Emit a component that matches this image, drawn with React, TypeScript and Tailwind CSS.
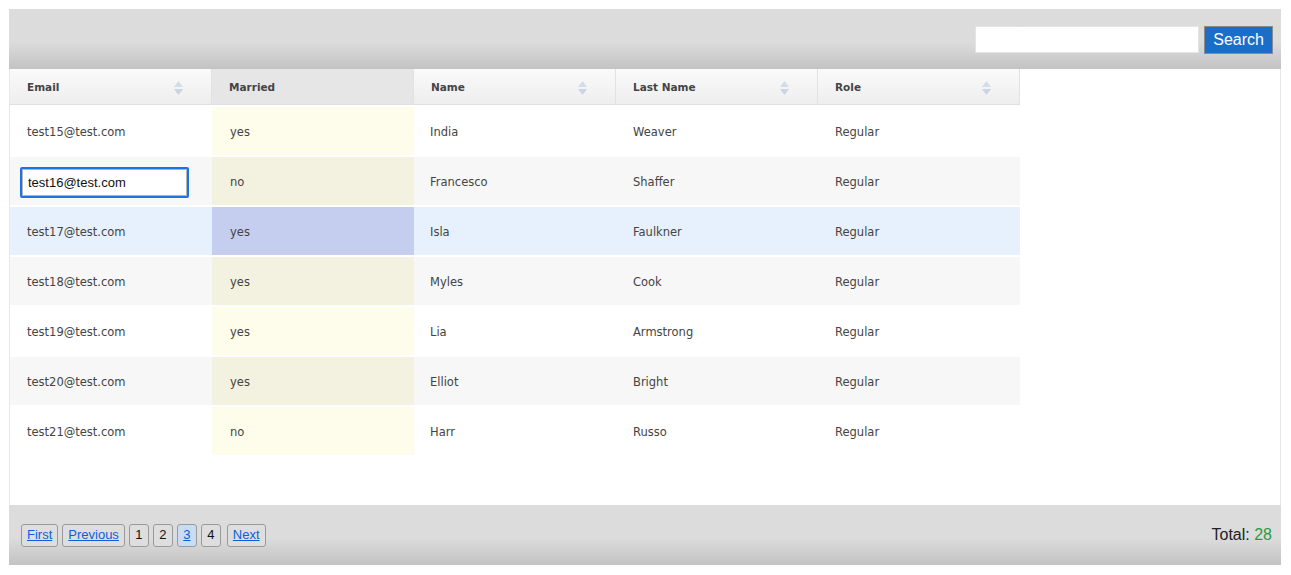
import React from 'react';

type Row = { email: string; married: string; name: string; last: string; role: string };

const rows: Row[] = [
  { email: 'test15@test.com', married: 'yes', name: 'India', last: 'Weaver', role: 'Regular' },
  { email: 'test16@test.com', married: 'no', name: 'Francesco', last: 'Shaffer', role: 'Regular' },
  { email: 'test17@test.com', married: 'yes', name: 'Isla', last: 'Faulkner', role: 'Regular' },
  { email: 'test18@test.com', married: 'yes', name: 'Myles', last: 'Cook', role: 'Regular' },
  { email: 'test19@test.com', married: 'yes', name: 'Lia', last: 'Armstrong', role: 'Regular' },
  { email: 'test20@test.com', married: 'yes', name: 'Elliot', last: 'Bright', role: 'Regular' },
  { email: 'test21@test.com', married: 'no', name: 'Harr', last: 'Russo', role: 'Regular' },
];

const SortIcon = () => (
  <svg width="9" height="14" viewBox="0 0 9 14" className="shrink-0">
    <path d="M4.5 0 L9 6 L0 6 Z" fill="#d3dde8" />
    <path d="M4.5 14 L9 8 L0 8 Z" fill="#c9d5e2" />
  </svg>
);

const HeaderCell = ({ label, sortable = true, active = false }: { label: string; sortable?: boolean; active?: boolean }) => (
  <div
    className={`w-[202px] h-full flex items-center justify-between pl-[17px] pr-[28px] pt-[2px] border-r border-[#e2e2e2] ${
      active ? 'bg-[#e6e6e6]' : 'bg-linear-to-b from-[#fafafa] to-[#eeeeee]'
    }`}
  >
    <span className="text-[10.5px] font-bold text-[#444]">{label}</span>
    {sortable && <SortIcon />}
  </div>
);

const PageBtn = ({ label, link = false, active = false, extra = '' }: { label: string; link?: boolean; active?: boolean; extra?: string }) => (
  <button
    className={`h-[23px] px-[5px] min-w-[20px] border border-[#9a9a9a] rounded-[3px] text-[13px] ${
      active ? 'bg-[#c8dcf4]' : 'bg-[#dedede]'
    } ${link ? 'text-[#0b5fd8] underline' : 'text-[#111]'} ${extra}`}
  >
    {label}
  </button>
);

export default function App() {
  return (
    <div className="bg-white min-h-[575px] pt-[9px] pl-[9px] font-['DejaVu_Sans',sans-serif]">
      <div className="w-[1272px] flex flex-col">
        {/* toolbar */}
        <div className="h-[60px] bg-linear-to-b from-[#dcdcdc] from-55% to-[#c3c3c3] flex items-center justify-end pr-[8px] pt-[1px] font-['Liberation_Sans',Arial,sans-serif]">
          <input className="w-[224px] h-[27px] bg-white border border-[#e4e4e4] outline-none" />
          <button className="ml-[5px] h-[28px] px-[8px] bg-[#1b6ec8] border border-[#8a8a8a] text-white text-[16px]">
            Search
          </button>
        </div>

        {/* body */}
        <div className="h-[436px] bg-white border-x border-[#e8e8e8]">
          <div className="w-[1010px]">
            <div className="h-[36px] flex border-b border-[#e0e0e0]">
              <HeaderCell label="Email" />
              <HeaderCell label="Married" sortable={false} active />
              <HeaderCell label="Name" />
              <HeaderCell label="Last Name" />
              <HeaderCell label="Role" />
            </div>
            {rows.map((r, i) => {
              const selected = i === 2;
              const odd = i % 2 === 0;
              const rowBg = selected ? 'bg-[#e7f1fd]' : odd ? 'bg-white' : 'bg-[#f7f7f7]';
              const marriedBg = selected ? 'bg-[#c6cef0]' : odd ? 'bg-[#fefdeb]' : 'bg-[#f3f1df]';
              return (
                <div key={r.email} className={`mt-[2px] h-[48px] flex text-[11.5px] text-[#444] ${rowBg}`}>
                  <div className="w-[202px] flex items-center pl-[17px] pt-[3px]">
                    {i === 1 ? (
                      <div className="ml-[-7px] w-[169px] h-[31px] border-2 border-[#1a73e8] rounded-[2px]">
                        <div className="w-full h-full bg-white border border-[#b4b4b4] flex items-center pl-[5px] font-['Liberation_Sans',Arial,sans-serif] text-[13px] text-[#111]">
                          {r.email}
                        </div>
                      </div>
                    ) : (
                      r.email
                    )}
                  </div>
                  <div className={`w-[202px] flex items-center pl-[18px] pt-[3px] ${marriedBg}`}>{r.married}</div>
                  <div className="w-[202px] flex items-center pl-[16px] pt-[3px]">{r.name}</div>
                  <div className="w-[202px] flex items-center pl-[17px] pt-[3px]">{r.last}</div>
                  <div className="w-[202px] flex items-center pl-[17px] pt-[3px]">{r.role}</div>
                </div>
              );
            })}
          </div>
        </div>

        {/* footer */}
        <div className="h-[60px] bg-linear-to-b from-[#dcdcdc] from-55% to-[#c3c3c3] flex items-center justify-between pl-[12px] pr-[9px] font-['Liberation_Sans',Arial,sans-serif]">
          <div className="flex items-center gap-[4px]">
            <PageBtn label="First" link />
            <PageBtn label="Previous" link />
            <PageBtn label="1" />
            <PageBtn label="2" />
            <PageBtn label="3" link active />
            <PageBtn label="4" />
            <PageBtn label="Next" link extra="ml-[2px]" />
          </div>
          <div className="text-[16px] text-[#222]">
            Total: <span className="text-[#2a9a3e]">28</span>
          </div>
        </div>
      </div>
    </div>
  );
}
